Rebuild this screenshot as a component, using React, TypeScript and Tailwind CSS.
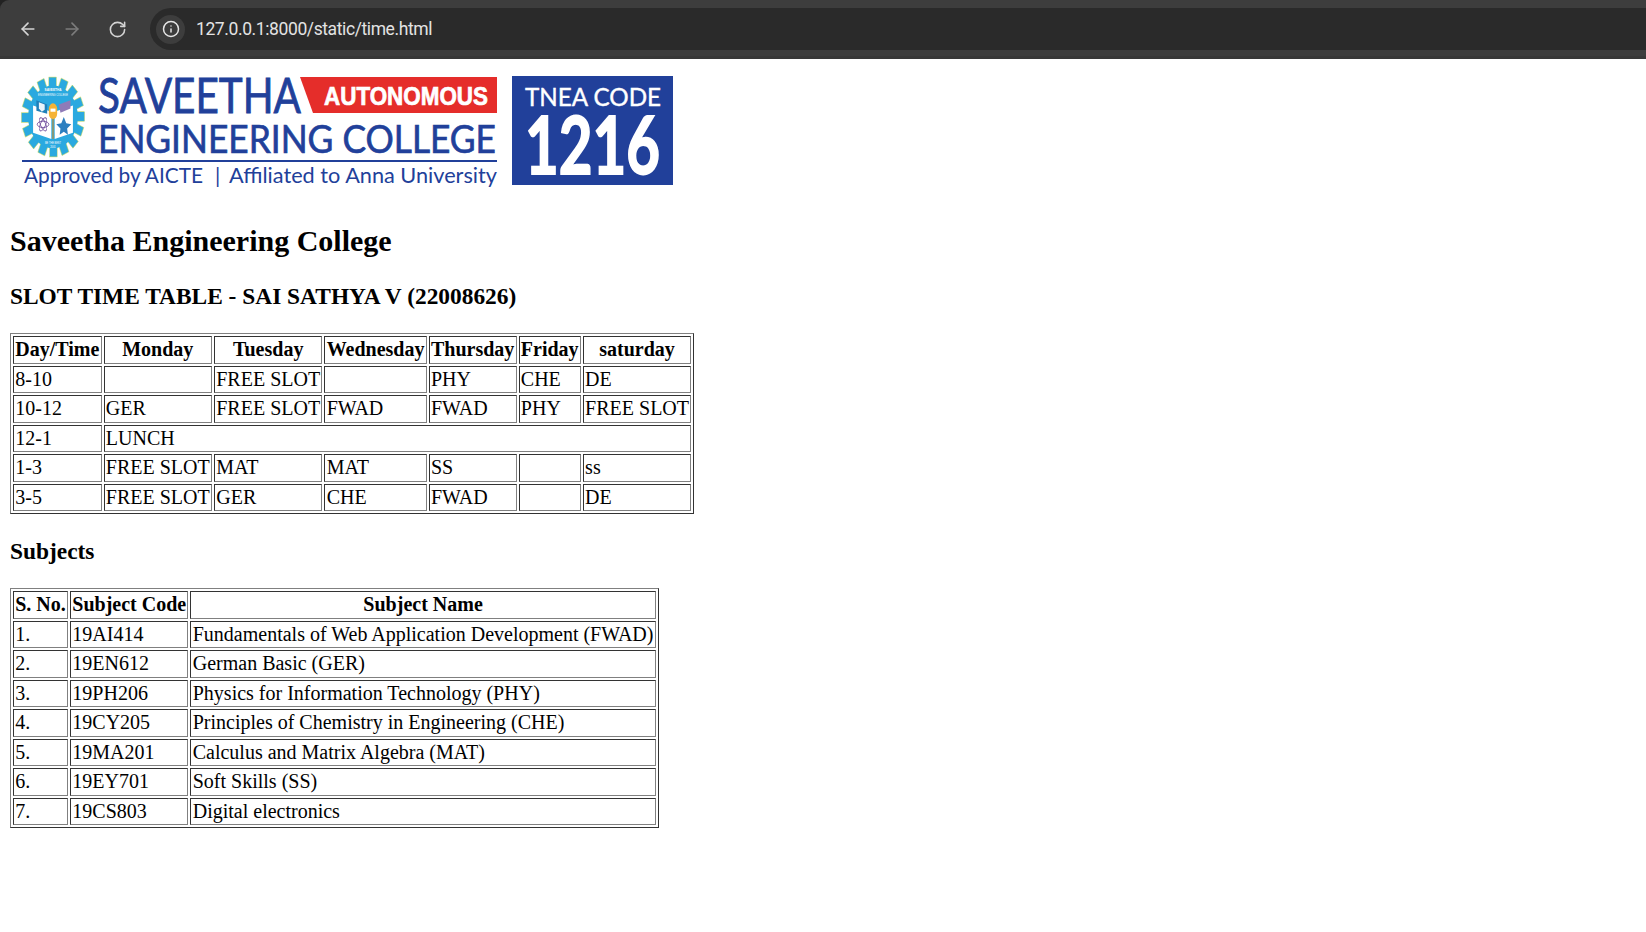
import { ArrowLeft, ArrowRight, Info, RotateCw } from 'lucide-react'

const slots = [
  ['8-10', '', 'FREE SLOT', '', 'PHY', 'CHE', 'DE'],
  ['10-12', 'GER', 'FREE SLOT', 'FWAD', 'FWAD', 'PHY', 'FREE SLOT'],
  ['1-3', 'FREE SLOT', 'MAT', 'MAT', 'SS', '', 'ss'],
  ['3-5', 'FREE SLOT', 'GER', 'CHE', 'FWAD', '', 'DE'],
]

const subjects = [
  ['1.', '19AI414', 'Fundamentals of Web Application Development (FWAD)'],
  ['2.', '19EN612', 'German Basic (GER)'],
  ['3.', '19PH206', 'Physics for Information Technology (PHY)'],
  ['4.', '19CY205', 'Principles of Chemistry in Engineering (CHE)'],
  ['5.', '19MA201', 'Calculus and Matrix Algebra (MAT)'],
  ['6.', '19EY701', 'Soft Skills (SS)'],
  ['7.', '19CS803', 'Digital electronics'],
]

// old-school border="1" look: table is outset, cells are inset
const table = 'border-separate border-spacing-[2px] border border-t-[#808080] border-l-[#808080] border-r-[#333333] border-b-[#333333]'
const td = 'border border-t-[#333333] border-l-[#333333] border-r-[#808080] border-b-[#808080] px-[1.25px] py-[1px] h-[27.5px] leading-[23px] whitespace-nowrap'
const th = 'border border-t-[#333333] border-l-[#333333] border-r-[#808080] border-b-[#808080] px-[1.25px] py-[1px] h-[27.5px] leading-[23px] font-bold text-center whitespace-nowrap'

function Toolbar() {
  return (
    <div className="h-[59px] bg-[#222222] shrink-0">
      <div className="h-full bg-[#3d3d3d] rounded-tl-[9px] border-b-[3px] border-[#383838] flex items-start pl-[18px] pt-[8px]">
        <div className="h-[42px] flex items-center">
          <ArrowLeft size={20} strokeWidth={2} className="text-[#d4d4d4]" />
          <ArrowRight size={20} strokeWidth={2} className="ml-[24px] text-[#7c7c7c]" />
          <RotateCw size={19} strokeWidth={2} className="ml-[26px] text-[#d4d4d4]" />
        </div>
        <div className="ml-[23px] flex-1 h-[42px] bg-[#2a2a2a] rounded-l-full flex items-center pl-[6px]">
          <div className="w-[29px] h-[29px] rounded-full bg-[#3d3d3d] flex items-center justify-center">
            <Info size={18} strokeWidth={2} className="text-[#e6e6e6]" />
          </div>
          <span className="ml-[11px] pt-[1px] text-[17.5px] tracking-[-0.4px] text-[#e3e3e3] font-['Roboto','Liberation_Sans',sans-serif]">
            127.0.0.1:8000/static/time.html
          </span>
        </div>
      </div>
    </div>
  )
}

function Gear() {
  const teeth = Array.from({ length: 16 }, (_, i) => i * 22.5)
  return (
    <g transform="translate(43 47) scale(0.83 1.05) translate(-53 -41)">
      {teeth.map((a) => (
        <rect key={a} x="48" y="3" width="9" height="12" fill="#2aa9e0" stroke="#c9d94a" strokeWidth="0.5" transform={`rotate(${a} 53 41)`} />
      ))}
      <circle cx="53" cy="41" r="30" fill="#2aa9e0" />
      <path d="M29 30 L51 36 L51 62 L29 56 Z" fill="#ffffff" />
      <path d="M55 36 L77 30 L77 56 L55 62 Z" fill="#ffffff" />
      <path d="M33 25 L46 29 L46 38 L33 35 Z" fill="#1f7fb8" />
      <path d="M36 27 L43 29 L43 34 L39.5 36 L36 33 Z" fill="#e8f4fb" />
      <path d="M60 29 L74 25 L74 33 L62 37 Z" fill="#8f7bb8" />
      <g fill="none" stroke="#6d4a9a" strokeWidth="0.9">
        <ellipse cx="41" cy="48" rx="7" ry="3" />
        <ellipse cx="41" cy="48" rx="7" ry="3" transform="rotate(60 41 48)" />
        <ellipse cx="41" cy="48" rx="7" ry="3" transform="rotate(120 41 48)" />
      </g>
      <path d="M66 41 L69 47 L75 48 L70 52 L71 58 L66 55 L61 58 L62 52 L57 48 L63 47 Z" fill="#2b7fc0" />
      <rect x="48" y="28" width="10" height="15" rx="5" fill="#f5b335" />
      <rect x="50" y="33" width="6" height="3" fill="#ffffff" />
      <path d="M53 43 L53 62" stroke="#c98f2e" strokeWidth="1.4" />
      <text x="53" y="16" textAnchor="middle" fontSize="3.8" fontWeight="700" fill="#ffffff" fontFamily="Liberation Sans, sans-serif">SAVEETHA</text>
      <text x="53" y="21" textAnchor="middle" fontSize="3" fill="#ffffff" fontFamily="Liberation Sans, sans-serif">ENGINEERING COLLEGE</text>
      <text x="53" y="67" textAnchor="middle" fontSize="3" fill="#ffffff" fontFamily="Liberation Sans, sans-serif">BE THE BEST</text>
      <text x="53" y="71" textAnchor="middle" fontSize="3" fill="#ffffff" fontFamily="Liberation Sans, sans-serif">2001</text>
    </g>
  )
}

function Logo() {
  return (
    <svg width="664" height="124" viewBox="0 0 664 124" className="block">
      <Gear />
      <text x="88" y="43" fontSize="48" fill="#21409a" stroke="#21409a" strokeWidth="0.8" textLength="203" lengthAdjust="spacingAndGlyphs" fontFamily="Lato, sans-serif">SAVEETHA</text>
      <path d="M290 7 H487 V43 H303 Z" fill="#e52d2a" />
      <text x="314" y="35" fontSize="25" fontWeight="700" fill="#ffffff" stroke="#ffffff" strokeWidth="0.7" textLength="164" lengthAdjust="spacingAndGlyphs" fontFamily="Liberation Sans, sans-serif">AUTONOMOUS</text>
      <text x="88" y="83" fontSize="39" fill="#21409a" stroke="#21409a" strokeWidth="0.7" textLength="398" lengthAdjust="spacingAndGlyphs" fontFamily="Lato, sans-serif">ENGINEERING COLLEGE</text>
      <rect x="12" y="90" width="475" height="2" fill="#21409a" />
      <text x="14" y="113" fontSize="21" fill="#21409a" textLength="179" lengthAdjust="spacingAndGlyphs" fontFamily="Lato, sans-serif">Approved by AICTE</text>
      <text x="205" y="113" fontSize="21" fill="#21409a" fontFamily="Lato, sans-serif">|</text>
      <text x="219" y="113" fontSize="21" fill="#21409a" textLength="268" lengthAdjust="spacingAndGlyphs" fontFamily="Lato, sans-serif">Affiliated to Anna University</text>
      <rect x="502" y="6" width="161" height="109" fill="#21409a" />
      <text x="515" y="36" fontSize="25" fill="#ffffff" stroke="#ffffff" strokeWidth="0.4" textLength="136" lengthAdjust="spacingAndGlyphs" fontFamily="Lato, sans-serif">TNEA CODE</text>
      <text x="515" y="104" fontSize="80" fontWeight="700" fill="#ffffff" stroke="#ffffff" strokeWidth="1.8" textLength="135" lengthAdjust="spacingAndGlyphs" fontFamily="Lato, sans-serif">1216</text>
    </svg>
  )
}

export default function App() {
  return (
    <div className="w-[1646px] h-[932px] overflow-hidden bg-white flex flex-col text-black text-[20px] font-['Liberation_Serif','Times_New_Roman',serif]">
      <Toolbar />
      <div className="pl-[10px]">
        <div className="pt-[11px]">
          <Logo />
        </div>
        <h1 className="mt-[30px] text-[30px] leading-[34px] font-bold">Saveetha Engineering College</h1>
        <h2 className="mt-[25px] text-[23.4px] leading-[27px] font-bold">SLOT TIME TABLE - SAI SATHYA V (22008626)</h2>
        <table className={`mt-[23px] ${table}`}>
          <thead>
            <tr>
              {['Day/Time', 'Monday', 'Tuesday', 'Wednesday', 'Thursday', 'Friday', 'saturday'].map((d) => (
                <th key={d} className={th}>{d}</th>
              ))}
            </tr>
          </thead>
          <tbody>
            {slots.slice(0, 2).map((row) => (
              <tr key={row[0]}>
                {row.map((c, i) => (
                  <td key={i} className={td}>{c}</td>
                ))}
              </tr>
            ))}
            <tr>
              <td className={td}>12-1</td>
              <td className={td} colSpan={6}>LUNCH</td>
            </tr>
            {slots.slice(2).map((row) => (
              <tr key={row[0]}>
                {row.map((c, i) => (
                  <td key={i} className={td}>{c}</td>
                ))}
              </tr>
            ))}
          </tbody>
        </table>
        <h3 className="mt-[25px] text-[23.4px] leading-[25px] font-bold">Subjects</h3>
        <table className={`mt-[24px] ${table}`}>
          <thead>
            <tr>
              <th className={th}>S. No.</th>
              <th className={th}>Subject Code</th>
              <th className={th}>Subject Name</th>
            </tr>
          </thead>
          <tbody>
            {subjects.map((row) => (
              <tr key={row[0]}>
                {row.map((c, i) => (
                  <td key={i} className={td}>{c}</td>
                ))}
              </tr>
            ))}
          </tbody>
        </table>
      </div>
    </div>
  )
}
